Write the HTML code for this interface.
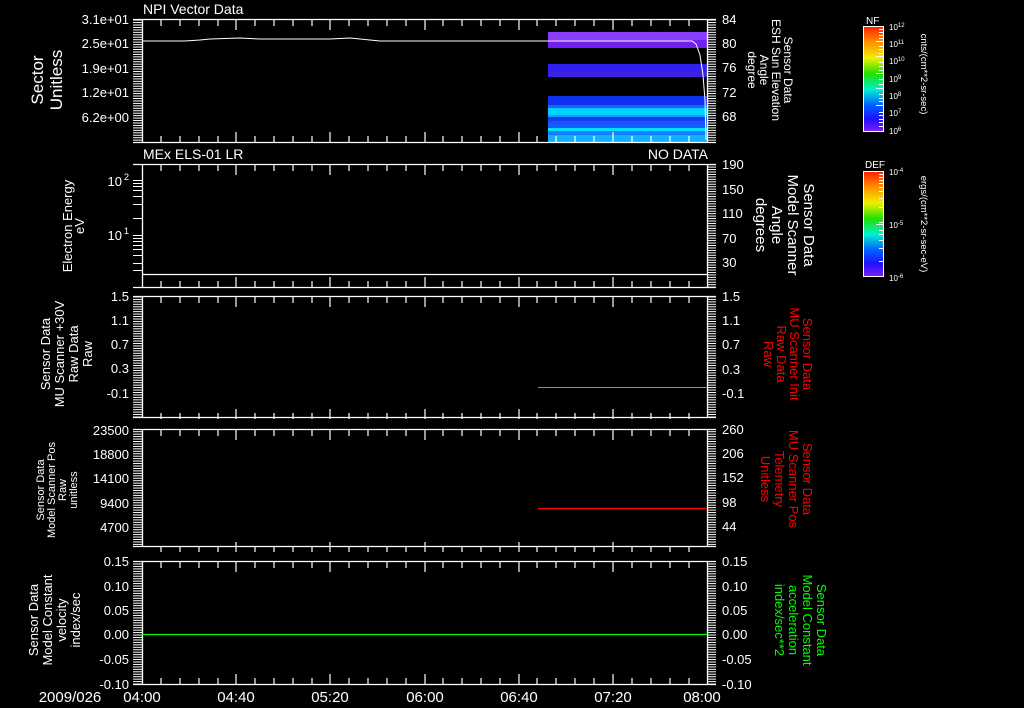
<!DOCTYPE html>
<html><head><meta charset="utf-8"><style>
html,body{margin:0;padding:0;background:#000;}
svg{display:block;font-family:"Liberation Sans",sans-serif;}
</style></head><body>
<svg width="1024" height="708" viewBox="0 0 1024 708" xmlns="http://www.w3.org/2000/svg">
<defs>
<pattern id="combL" x="0" y="0" width="10" height="2.45" patternUnits="userSpaceOnUse"><rect x="0" y="0" width="10" height="1" fill="#fff"/></pattern>
<linearGradient id="rb" x1="0" y1="0" x2="0" y2="1">
<stop offset="0" stop-color="#ff2000"/><stop offset="0.15" stop-color="#ff9000"/><stop offset="0.3" stop-color="#f0f000"/><stop offset="0.45" stop-color="#20e000"/><stop offset="0.6" stop-color="#00f0d0"/><stop offset="0.75" stop-color="#0060ff"/><stop offset="0.88" stop-color="#2010ff"/><stop offset="1" stop-color="#8020f0"/>
</linearGradient>
</defs>
<rect width="1024" height="708" fill="#000"/>

<g>
<rect x="548" y="32" width="159" height="8" fill="#8a3cff"/>
<rect x="548" y="40" width="159" height="8" fill="#7020f0"/>
<rect x="548" y="64" width="159" height="7" fill="#3020f0"/>
<rect x="548" y="71" width="159" height="6" fill="#4020e0"/>
<rect x="548" y="96" width="159" height="9" fill="#1030f0"/>
<rect x="548" y="105" width="159" height="3" fill="#2060ff"/>
<rect x="548" y="108" width="159" height="7" fill="#00d0ff"/>
<rect x="548" y="115" width="159" height="2" fill="#10a0ff"/>
<rect x="548" y="117" width="159" height="4" fill="#1040f0"/>
<rect x="548" y="121" width="159" height="3" fill="#2050ff"/>
<rect x="548" y="124" width="159" height="4" fill="#1060ff"/>
<rect x="548" y="128" width="159" height="3" fill="#00e0ff"/>
<rect x="548" y="131" width="159" height="4" fill="#1080ff"/>
<rect x="548" y="135" width="159" height="7" fill="#10b0ff"/>
</g>
<polyline points="142,41 185,41 200,40 210,39 240,38 260,39 330,39 350,38 370,40 380,41 540,41 692,41 696,44 700,55 703,75 705,100 706,140" fill="none" stroke="#fff" stroke-width="1"/>

<g stroke="#fff" stroke-width="1.3" fill="none">
<path d="M133,19.5H716 M133,142.5H716 M142.5,19V143 M707.5,19V143"/>
<path d="M133,164.5H716 M133,287.5H716 M142.5,164V288 M707.5,164V288"/>
<path d="M133,296.5H716 M133,417.5H716 M142.5,296V418 M707.5,296V418"/>
<path d="M133,429.5H716 M133,546.5H716 M142.5,429V547 M707.5,429V547"/>
<path d="M133,561.5H716 M133,684.5H716 M142.5,561V685 M707.5,561V685"/>
</g>
<g fill="url(#combL)">
<rect x="133" y="20" width="9" height="122"/><rect x="708" y="20" width="8" height="122"/>
<rect x="708" y="165" width="8" height="122"/>
<rect x="133" y="297" width="9" height="120"/><rect x="708" y="297" width="8" height="120"/>
<rect x="133" y="430" width="9" height="116"/><rect x="708" y="430" width="8" height="116"/>
<rect x="133" y="562" width="9" height="122"/><rect x="708" y="562" width="8" height="122"/>
</g>
<g stroke="#fff" stroke-width="1">
<path d="M133,180.5H142 M133,183.5H142 M133,186.5H142 M133,190.5H142 M133,196.5H142 M133,204.5H142 M133,218.5H142 M133,235.5H142 M133,238.5H142 M133,241.5H142 M133,245.5H142 M133,249.5H142 M133,255.5H142 M133,263.5H142 M133,270.5H142"/>
</g>
<g stroke="#fff" stroke-width="1.2" id="tt">
<path d="M161,20v6M180,20v6M199,20v6M218,20v6M236,20v10M255,20v6M274,20v6M293,20v6M312,20v6M330,20v10M349,20v6M368,20v6M387,20v6M406,20v6M425,20v10M443,20v6M462,20v6M481,20v6M500,20v6M519,20v10M537,20v6M556,20v6M575,20v6M594,20v6M613,20v10M632,20v6M651,20v6M670,20v6M689,20v6"/>
<path d="M161,142v-6M180,142v-6M199,142v-6M218,142v-6M236,142v-10M255,142v-6M274,142v-6M293,142v-6M312,142v-6M330,142v-10M349,142v-6M368,142v-6M387,142v-6M406,142v-6M425,142v-10M443,142v-6M462,142v-6M481,142v-6M500,142v-6M519,142v-10M537,142v-6M556,142v-6M575,142v-6M594,142v-6M613,142v-10M632,142v-6M651,142v-6M670,142v-6M689,142v-6"/>
</g>
<use href="#tt" y="145"/>
<use href="#tt" y="277"/>
<use href="#tt" y="410"/>
<use href="#tt" y="542"/>

<line x1="142" y1="274.5" x2="707" y2="274.5" stroke="#fff" stroke-width="1.2"/>
<line x1="538" y1="387.5" x2="707" y2="387.5" stroke="#888" stroke-width="1"/>
<line x1="538" y1="508.5" x2="707" y2="508.5" stroke="#ff0000" stroke-width="1.5"/>
<line x1="142" y1="634.5" x2="707" y2="634.5" stroke="#00ff00" stroke-width="1.2"/>

<g fill="#fff" font-size="14">
<text x="143" y="14">NPI Vector Data</text>
<text x="143" y="159">MEx ELS-01 LR</text>
<text x="708" y="159" text-anchor="end">NO DATA</text>
</g>

<g fill="#fff" font-size="13" text-anchor="end">
<text x="129" y="24">3.1e+01</text><text x="129" y="48">2.5e+01</text><text x="129" y="73">1.9e+01</text><text x="129" y="97">1.2e+01</text><text x="129" y="122">6.2e+00</text>
<text x="122" y="186">10</text><text x="129" y="180" font-size="9">2</text>
<text x="122" y="240">10</text><text x="129" y="234" font-size="9">1</text>
<text x="129" y="301">1.5</text><text x="129" y="325">1.1</text><text x="129" y="349">0.7</text><text x="129" y="373">0.3</text><text x="129" y="398">-0.1</text>
<text x="129" y="435">23500</text><text x="129" y="459">18800</text><text x="129" y="483">14100</text><text x="129" y="508">9400</text><text x="129" y="532">4700</text>
<text x="129" y="566">0.15</text><text x="129" y="591">0.10</text><text x="129" y="615">0.05</text><text x="129" y="639">0.00</text><text x="129" y="664">-0.05</text><text x="129" y="689">-0.10</text>
</g>
<g fill="#fff" font-size="13">
<text x="722" y="24">84</text><text x="722" y="48">80</text><text x="722" y="72">76</text><text x="722" y="97">72</text><text x="722" y="121">68</text>
<text x="722" y="169">190</text><text x="722" y="194">150</text><text x="722" y="218">110</text><text x="722" y="243">70</text><text x="722" y="267">30</text>
<text x="722" y="301">1.5</text><text x="722" y="325">1.1</text><text x="722" y="349">0.7</text><text x="722" y="374">0.3</text><text x="722" y="398">-0.1</text>
<text x="722" y="434">260</text><text x="722" y="458">206</text><text x="722" y="482">152</text><text x="722" y="507">98</text><text x="722" y="531">44</text>
<text x="722" y="566">0.15</text><text x="722" y="591">0.10</text><text x="722" y="615">0.05</text><text x="722" y="639">0.00</text><text x="722" y="664">-0.05</text><text x="722" y="689">-0.10</text>
</g>
<g fill="#fff" font-size="15" text-anchor="middle">
<text x="70" y="702">2009/026</text>
<text x="142" y="702">04:00</text><text x="236" y="702">04:40</text><text x="330" y="702">05:20</text><text x="425" y="702">06:00</text><text x="519" y="702">06:40</text><text x="613" y="702">07:20</text><text x="702" y="702">08:00</text>
</g>

<g fill="#fff" text-anchor="middle">
<text transform="translate(46,80) rotate(-90)" font-size="17"><tspan x="0" y="-3">Sector</tspan><tspan x="0" y="16">Unitless</tspan></text>
<text transform="translate(72,226) rotate(-90)" font-size="13"><tspan x="0" y="0">Electron Energy</tspan><tspan x="0" y="12">eV</tspan></text>
<text transform="translate(50,354) rotate(-90)" font-size="13"><tspan x="0" y="0">Sensor Data</tspan><tspan x="0" y="14">MU Scanner +30V</tspan><tspan x="0" y="28">Raw Data</tspan><tspan x="0" y="42">Raw</tspan></text>
<text transform="translate(44,490) rotate(-90)" font-size="11"><tspan x="0" y="0">Sensor Data</tspan><tspan x="0" y="11">Model Scanner Pos</tspan><tspan x="0" y="22">Raw</tspan><tspan x="0" y="33">unitless</tspan></text>
<text transform="translate(38,620) rotate(-90)" font-size="13"><tspan x="0" y="0">Sensor Data</tspan><tspan x="0" y="14">Model Constant</tspan><tspan x="0" y="28">velocity</tspan><tspan x="0" y="42">index/sec</tspan></text>
</g>
<text transform="translate(784,70) rotate(90)" fill="#fff" font-size="12" text-anchor="middle"><tspan x="0" y="0">Sensor Data</tspan><tspan x="0" y="12">ESH Sun Elevation</tspan><tspan x="0" y="24">Angle</tspan><tspan x="0" y="36">degree</tspan></text>
<text transform="translate(804,225) rotate(90)" fill="#fff" font-size="15" text-anchor="middle"><tspan x="0" y="0">Sensor Data</tspan><tspan x="0" y="16">Model Scanner</tspan><tspan x="0" y="32">Angle</tspan><tspan x="0" y="48">degrees</tspan></text>
<text transform="translate(803,354) rotate(90)" fill="#ff0000" font-size="13" text-anchor="middle"><tspan x="0" y="0">Sensor Data</tspan><tspan x="0" y="13">MU Scanner Init</tspan><tspan x="0" y="26">Raw Data</tspan><tspan x="0" y="39">Raw</tspan></text>
<text transform="translate(803,479) rotate(90)" fill="#ff0000" font-size="13" text-anchor="middle"><tspan x="0" y="0">Sensor Data</tspan><tspan x="0" y="14">MU Scanner Pos</tspan><tspan x="0" y="28">Telemetry</tspan><tspan x="0" y="42">Unitless</tspan></text>
<text transform="translate(817,620) rotate(90)" fill="#00ff00" font-size="13" text-anchor="middle"><tspan x="0" y="0">Sensor Data</tspan><tspan x="0" y="14">Model Constant</tspan><tspan x="0" y="28">acceleration</tspan><tspan x="0" y="42">index/sec**2</tspan></text>

<g>
<rect x="863.5" y="26.5" width="20" height="105" fill="url(#rb)" stroke="#fff" stroke-width="1"/>
<rect x="863.5" y="171.5" width="20" height="105" fill="url(#rb)" stroke="#fff" stroke-width="1"/>
<g stroke="#fff" stroke-width="1">
<path d="M879,29.5h4M879,32.5h4M879,35.5h4M879,38.5h4M876,41.5h7M879,46.5h4M879,49.5h4M879,53.5h4M876,56.5h7M879,62.5h4M879,66.5h4M879,70.5h4M876,73.5h7M879,79.5h4M879,84.5h4M876,88.5h7M879,94.5h4M879,98.5h4M879,101.5h4M876,105.5h7M879,112.5h4M879,115.5h4M879,119.5h4M879,122.5h4M879,126.5h4"/>
<path d="M879,174.5h4M879,177.5h4M879,180.5h4M879,183.5h4M879,187.5h4M879,191.5h4M879,198.5h4M879,207.5h4M879,222.5h4M876,224.5h7M879,230.5h4M879,234.5h4M879,240.5h4M879,248.5h4M879,261.5h4"/>
</g>
<text x="866" y="24" fill="#fff" font-size="10">NF</text>
<text x="865" y="168" fill="#fff" font-size="10">DEF</text>
<g fill="#fff" font-size="8">
<text x="889" y="30">10<tspan font-size="6" dy="-3">12</tspan></text>
<text x="889" y="47">10<tspan font-size="6" dy="-3">11</tspan></text>
<text x="889" y="64">10<tspan font-size="6" dy="-3">10</tspan></text>
<text x="889" y="82">10<tspan font-size="6" dy="-3">9</tspan></text>
<text x="889" y="99">10<tspan font-size="6" dy="-3">8</tspan></text>
<text x="889" y="116">10<tspan font-size="6" dy="-3">7</tspan></text>
<text x="889" y="134">10<tspan font-size="6" dy="-3">6</tspan></text>
<text x="889" y="175">10<tspan font-size="6" dy="-3">-4</tspan></text>
<text x="889" y="228">10<tspan font-size="6" dy="-3">-5</tspan></text>
<text x="889" y="281">10<tspan font-size="6" dy="-3">-6</tspan></text>
</g>
<text transform="translate(921,74) rotate(90)" fill="#fff" font-size="9.5" text-anchor="middle">cnts/(cm**2-sr-sec)</text>
<text transform="translate(921,224) rotate(90)" fill="#fff" font-size="9.5" text-anchor="middle">ergs/(cm**2-sr-sec-eV)</text>
</g>
</svg>
</body></html>
